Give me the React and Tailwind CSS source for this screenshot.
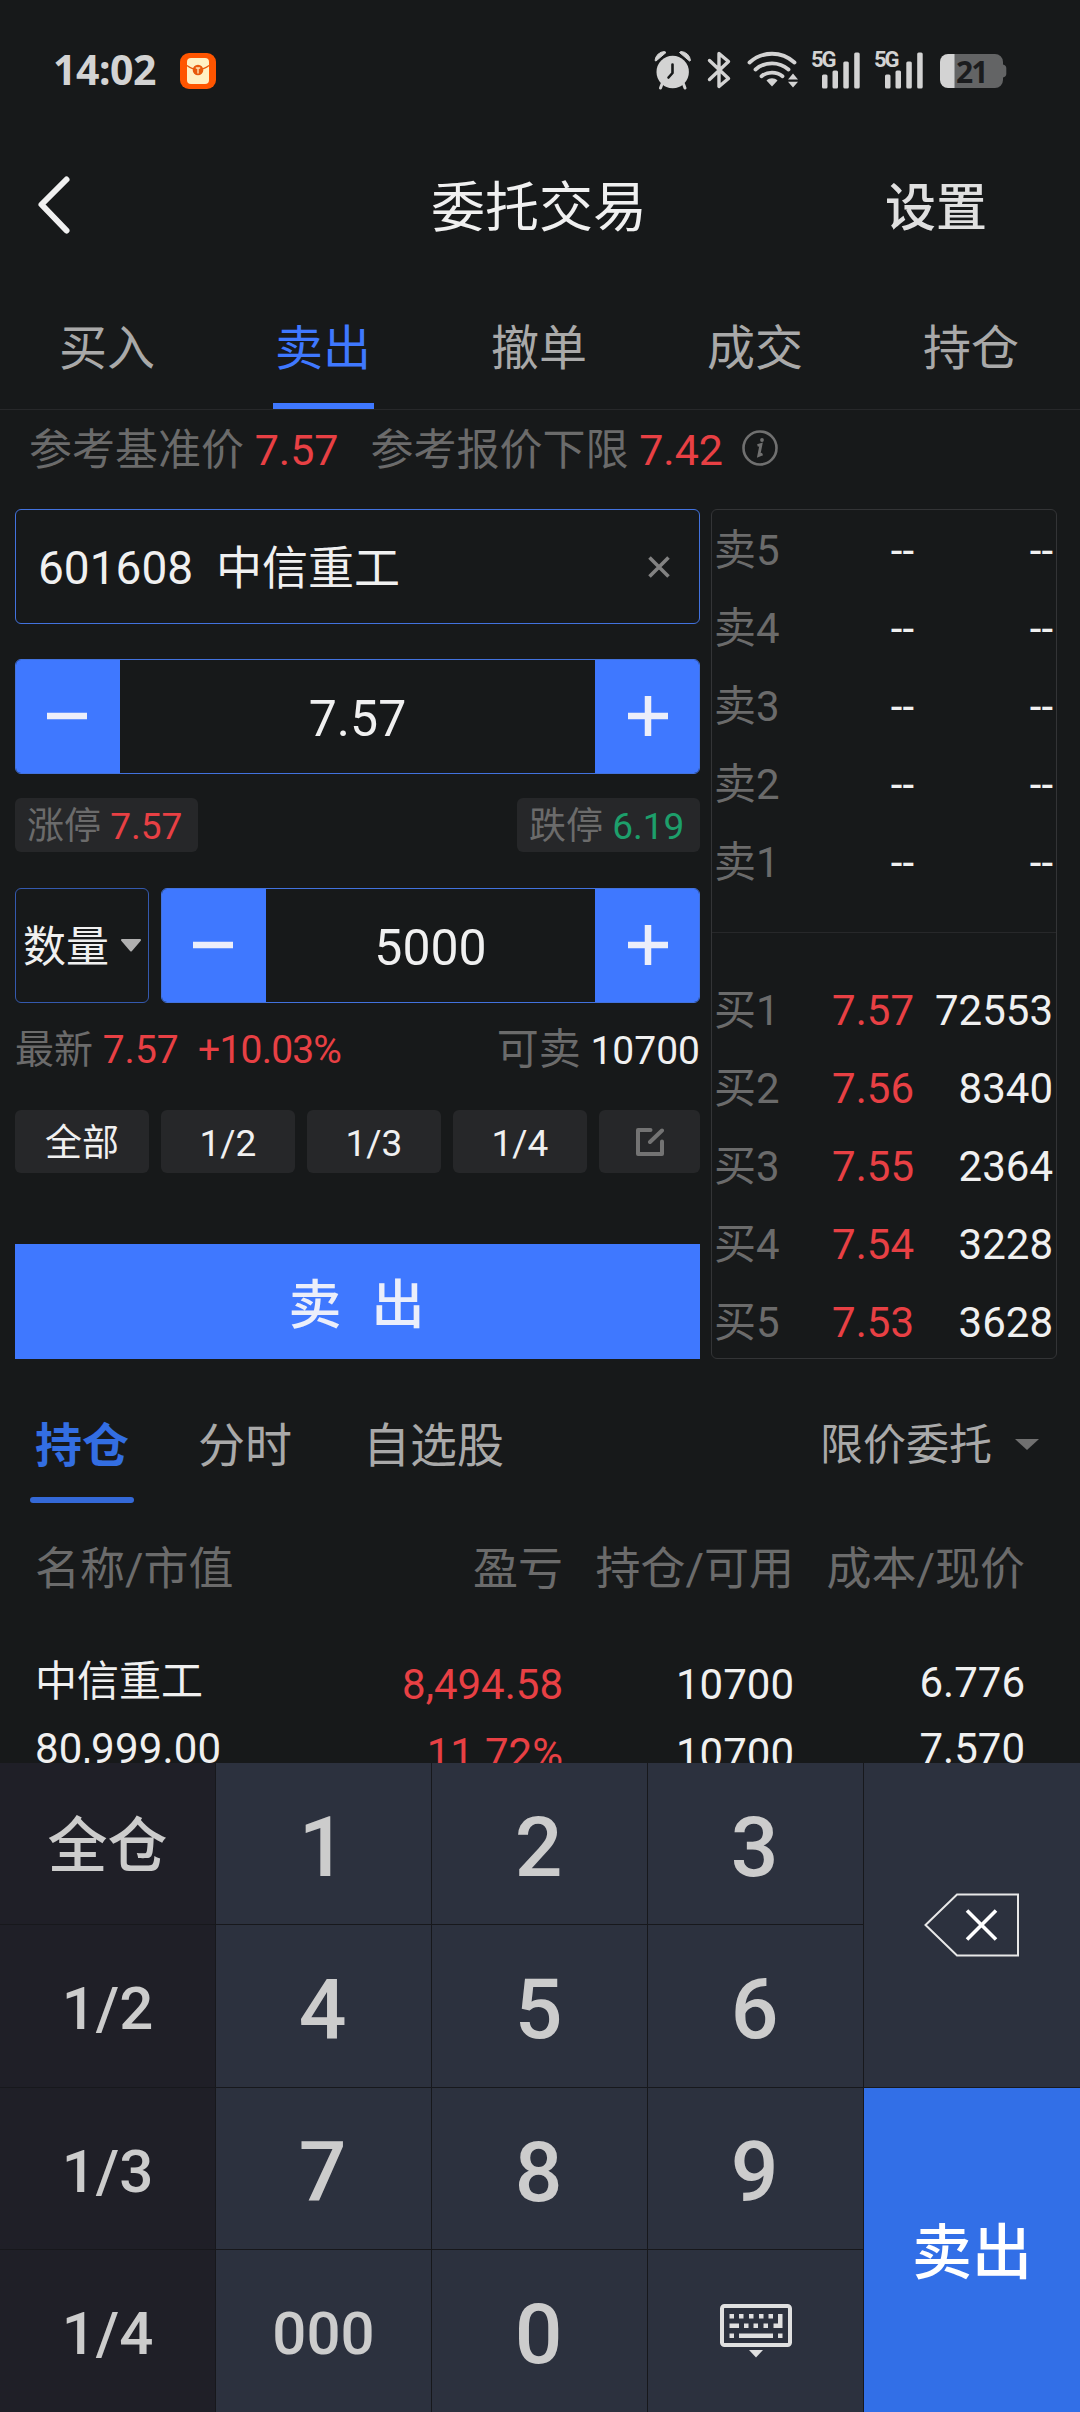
import { useState } from 'react';
import clsx from 'clsx';

const mainTabs = ['买入', '卖出', '撤单', '成交', '持仓'];

const sellRows = [
  { label: '卖5', price: '--', volume: '--' },
  { label: '卖4', price: '--', volume: '--' },
  { label: '卖3', price: '--', volume: '--' },
  { label: '卖2', price: '--', volume: '--' },
  { label: '卖1', price: '--', volume: '--' },
];

const buyRows = [
  { label: '买1', price: '7.57', volume: '72553' },
  { label: '买2', price: '7.56', volume: '8340' },
  { label: '买3', price: '7.55', volume: '2364' },
  { label: '买4', price: '7.54', volume: '3228' },
  { label: '买5', price: '7.53', volume: '3628' },
];

const AlarmIcon = () => (
  <svg width="38" height="40" viewBox="0 0 38 40" fill="#d3d3d3">
    <path d="M1 10.500A10 10 0 0 1 10.500 1.500L12 2.500 2 11Z" stroke="#d3d3d3" strokeLinejoin="round" />
    <path d="M36.500 10.500A10 10 0 0 0 27 1.500L25.500 2.500 35.500 11Z" stroke="#d3d3d3" strokeLinejoin="round" />
    <circle cx="18.700" cy="22" r="16.200" />
    <path d="M8 34l-1.500 4M29.500 34l1.500 4" stroke="#d3d3d3" strokeWidth="3" strokeLinecap="round" />
    <path d="M18.500 14.500v8.500l-4 4.500" fill="none" stroke="#17191a" strokeWidth="2.600" strokeLinecap="round" strokeLinejoin="round" />
  </svg>
);

const BluetoothIcon = () => (
  <svg width="25" height="40" viewBox="0 0 25 40" fill="none" stroke="#d3d3d3" strokeWidth="3.400" strokeLinejoin="round" strokeLinecap="round">
    <path d="M2.500 10.500L21.500 28.500 12 36.500V3.500L21.500 11.500 2.500 29.500" />
  </svg>
);

const WifiIcon = () => (
  <svg width="52" height="40" viewBox="0 0 52 40" fill="none" stroke="#d3d3d3" strokeWidth="3.800" strokeLinecap="round">
    <path d="M2.500 12.500C15.500 0.800 34.500 0.800 47.500 12.500" />
    <path d="M8.500 19.500C18 11.300 32 11.300 41.500 19.500" />
    <path d="M14.500 26.200C20.500 21.300 29.500 21.300 35.500 26.200" />
    <path d="M25 36.500L19.500 30.500C22.500 27.500 27.500 27.500 30.500 30.500Z" fill="#d3d3d3" stroke="none" />
    <path d="M46 23.500L51 29.500H41ZM46 37.500L51 31.800H41Z" fill="#d3d3d3" stroke="none" />
  </svg>
);

const SignalIcon = () => (
  <div className="relative h-10 w-[49px]">
    <svg width="49" height="40" viewBox="0 0 49 40" fill="#d3d3d3">
      <rect x="10" y="24.500" width="5.500" height="14" rx="1.500" />
      <rect x="20.500" y="20.500" width="5.500" height="18" rx="1.500" />
      <rect x="31.300" y="11.500" width="5.500" height="27" rx="1.500" />
      <rect x="42.200" y="2.500" width="5.500" height="36" rx="1.500" />
    </svg>
    <span className="absolute -left-px -top-0.5 text-[22px] font-bold leading-[24px] tracking-[-2px] text-[#d3d3d3]">5G</span>
  </div>
);

const BatteryIcon = () => (
  <div className="relative h-[34px] w-[67px]">
    <svg width="67" height="34" viewBox="0 0 67 34">
      <path d="M8 0H55a8 8 0 0 1 8 8v2.500c2 .5 3.300 1.500 3.300 3.500v6c0 2-1.300 3-3.300 3.500V26a8 8 0 0 1-8 8H8Z" fill="#636465" />
      <path d="M8 0H14.500V34H8a8 8 0 0 1-8-8V8a8 8 0 0 1 8-8Z" fill="#d3d3d3" />
    </svg>
    <span className="absolute left-4 top-0 font-['Noto_Sans',sans-serif] text-[30px] font-bold leading-[35px] tracking-[-2px] text-[#1b1c1e]">21</span>
  </div>
);

const RedPacketIcon = () => (
  <svg width="36" height="36" viewBox="0 0 36 36">
    <rect width="36" height="36" rx="9" fill="#ff5500" />
    <rect x="7" y="5" width="22" height="26" rx="4" fill="#fff0c4" />
    <path d="M7 12.500C13 17.500 23 17.500 29 12.500" fill="none" stroke="#e8590c" strokeWidth="1.200" />
    <circle cx="18" cy="17" r="5.300" fill="#e8590c" />
    <path d="M15.800 15h4.400M18 15v5.500" stroke="#ffe0b0" strokeWidth="1.400" />
  </svg>
);

const KeyboardIcon = () => (
  <svg width="72" height="54" viewBox="0 0 72 54" fill="#e0e0e0">
    <rect x="2" y="2" width="68" height="39" rx="2.500" fill="none" stroke="#e0e0e0" strokeWidth="4" />
    <path d="M9.500 10h4.500v4.500H9.500zM19 10h4.500v4.500H19zM29 10h4.500v4.500H29zM39 10h4.500v4.500H39zM48.500 10h4.500v4.500H48.500z" />
    <path d="M9.500 19.500h9.500V24H9.500zM24 19.500h4.500V24H24zM33.500 19.500H38V24H33.500zM43.500 19.500H48V24H43.500zM53.500 19.500H58V10h4.500V24h-9z" />
    <path d="M9.500 29.500h4.500V34H9.500zM19 29.500h34V34H19zM58 29.500h4.500V34H58z" />
    <path d="M29 46H43L36 53.500Z" />
  </svg>
);

const Stepper = ({ value, onMinus, onPlus }) => (
  <div className="flex h-[115px] flex-1 overflow-hidden rounded-md border border-[#4272de] bg-[#17191a]">
    <button onClick={onMinus} className="-my-px -ml-px flex w-[105px] items-center justify-center bg-[#3f78ff]">
      <svg width="40" height="40" viewBox="0 0 40 40" className="-ml-0.5 -mt-px" stroke="#eceefa" strokeWidth="6.500">
        <path d="M0 20H40" />
      </svg>
    </button>
    <div className="flex flex-1 items-center justify-center pt-1 text-[50px] text-[#f0f0f0]">{value}</div>
    <button onClick={onPlus} className="-my-px -mr-px flex w-[105px] items-center justify-center bg-[#3f78ff]">
      <svg width="40" height="40" viewBox="0 0 40 40" className="-mt-px" stroke="#eceefa" strokeWidth="6.500">
        <path d="M0 20H40M20 0V40" />
      </svg>
    </button>
  </div>
);

const BookRow = ({ row }) => (
  <div className="flex h-[78px] items-center pt-0.5 text-[42px]">
    <span className="w-[80px] text-[#6b6b6b]">{row.label}</span>
    <span className={clsx('w-[120px] text-right', row.price === '--' ? 'text-[#f0f0f0]' : 'text-[#e84044]')}>{row.price}</span>
    <span className="flex-1 text-right text-[#f0f0f0]">{row.volume}</span>
  </div>
);

const SideKey = ({ children }) => (
  <button className="flex items-center justify-center bg-[#1f1f27] pt-1.5 text-[60px] font-medium text-[#cccccc]">{children}</button>
);

const NumKey = ({ children, onClick }) => (
  <button onClick={onClick} className="flex items-center justify-center bg-[#2c313e] pr-0.5 pt-2 text-[84px] font-medium text-[#cccccc]">
    {children}
  </button>
);

const App = () => {
  const [activeTab, setActiveTab] = useState('卖出');
  const [price, setPrice] = useState(7.57);
  const [amount, setAmount] = useState('5000');

  const press = (key) => setAmount((prev) => prev + key);

  return (
    <div className="flex h-[2412px] w-[1080px] flex-col overflow-hidden bg-[#17191a] font-[Roboto,'Noto_Sans_CJK_SC',sans-serif] leading-none">
      {/* Barra de estado */}
      <div className="flex h-[140px] shrink-0 items-center pl-[53px] pr-[73px]">
        <span className="w-[127px] pb-0.5 font-['Noto_Sans',sans-serif] text-[41px] font-bold tracking-[-0.5px] text-[#d3d3d3]">14:02</span>
        <div className="flex-1 pt-0.5">
          <RedPacketIcon />
        </div>
        <div className="flex items-center">
          <AlarmIcon />
          <div className="ml-[15px]"><BluetoothIcon /></div>
          <div className="ml-[15px]"><WifiIcon /></div>
          <div className="ml-[13px]"><SignalIcon /></div>
          <div className="ml-[14px]"><SignalIcon /></div>
          <div className="ml-[16px] pt-0.5"><BatteryIcon /></div>
        </div>
      </div>

      {/* Cabecera */}
      <header className="grid h-[132px] shrink-0 grid-cols-3 items-center">
        <button className="pb-[3px] pl-[37px]">
          <svg width="34" height="60" viewBox="0 0 34 60" fill="none" stroke="#f0f0f0" strokeWidth="6" strokeLinecap="round" strokeLinejoin="round">
            <path d="M29.500 4.500L4.500 29.500 29.500 55.500" />
          </svg>
        </button>
        <h1 className="pr-0.5 pt-1.5 text-center text-[54px] text-[#f0f0f0]">委托交易</h1>
        <button className="pr-[93px] pt-1 text-right text-[51px] font-medium text-[#e0e0e0]">设置</button>
      </header>

      {/* Pestañas principales */}
      <nav className="grid h-[138px] shrink-0 grid-cols-5 border-b border-[#27282a]">
        {mainTabs.map((tab) => (
          <button
            key={tab}
            onClick={() => setActiveTab(tab)}
            className={clsx('relative flex items-center justify-center pr-0.5 pt-4 text-[48px]', tab === activeTab ? 'text-[#3f78ff]' : 'text-[#a9a9a9]')}
          >
            {tab}
            {tab === activeTab && <span className="absolute bottom-0 left-[57px] h-1.5 w-[101px] bg-[#3f78ff]" />}
          </button>
        ))}
      </nav>

      <div className="flex h-[78px] shrink-0 items-center whitespace-pre pl-[29px] pt-0.5 text-[43px] text-[#6b6b6b]">
        <span>参考基准价 <span className="text-[#e84044]">7.57</span></span>
        <span className="ml-[32px]">参考报价下限 <span className="text-[#e84044]">7.42</span></span>
        <svg width="36" height="36" viewBox="0 0 36 36" fill="none" stroke="#707070" className="mb-1 ml-[19px]">
          <circle cx="18" cy="18" r="16.500" strokeWidth="2.600" />
          <path d="M15.500 15.500L19 14.500 16.800 25.500 20.500 24" strokeWidth="2.800" />
          <circle cx="20" cy="10" r="1.900" fill="#707070" stroke="none" />
        </svg>
      </div>

      {/* Formulario y libro de órdenes */}
      <section className="mt-[21px] flex h-[850px] shrink-0 gap-[11px] pl-[15px]">
        <div className="flex w-[685px] flex-col">
          <div className="flex h-[115px] items-center justify-between rounded-md border border-[#4272de] pl-[22px] pr-[29px]">
            <span className="whitespace-pre pt-0.5 text-[46px] text-[#f0f0f0]">601608  中信重工</span>
            <svg width="22" height="22" viewBox="0 0 22 22" stroke="#828282" strokeWidth="3.600">
              <path d="M1.500 1.500L20.500 20.500M20.500 1.500L1.500 20.500" />
            </svg>
          </div>

          <div className="mt-[35px] flex">
            <Stepper value={price.toFixed(2)} onMinus={() => setPrice(price - 0.01)} onPlus={() => setPrice(price + 0.01)} />
          </div>

          <div className="mt-6 flex justify-between text-[37px] text-[#6b6b6b]">
            <div className="flex h-[54px] w-[183px] items-center whitespace-pre rounded-md bg-[#262729] pl-3 pt-0.5">
              <span>涨停 <span className="text-[#e84044]">7.57</span></span>
            </div>
            <div className="flex h-[54px] w-[183px] items-center whitespace-pre rounded-md bg-[#262729] pl-3 pt-0.5">
              <span>跌停 <span className="text-[#1d9f6b]">6.19</span></span>
            </div>
          </div>

          <div className="mt-9 flex gap-3">
            <button className="flex h-[115px] w-[134px] items-center rounded-md border border-[#3459ae] pl-[7px] pt-1 text-[43px] text-[#f0f0f0]">
              数量
              <svg width="20" height="13" viewBox="0 0 20 13" fill="#b0b0b0" stroke="#b0b0b0" strokeWidth="2" strokeLinejoin="round" className="mb-1 ml-[12px]">
                <path d="M1 1H19L10 11.500Z" />
              </svg>
            </button>
            <Stepper
              value={amount}
              onMinus={() => setAmount(String(Number(amount) - 100))}
              onPlus={() => setAmount(String(Number(amount) + 100))}
            />
          </div>

          <div className="flex h-[92px] items-center justify-between whitespace-pre pt-0.5 text-[39px]">
            <span className="text-[#e84044]"><span className="text-[#6b6b6b]">最新</span> 7.57  <span className="tracking-[-0.8px]">+10.03%</span></span>
            <span className="text-[#f0f0f0]"><span className="text-[42px] text-[#6b6b6b]">可卖</span> 10700</span>
          </div>

          <div className="mt-[15px] flex gap-3 text-[37px] text-[#f0f0f0]">
            {['全部', '1/2', '1/3', '1/4'].map((item) => (
              <button key={item} className="flex h-[63px] w-[134px] items-center justify-center rounded-md bg-[#262729] pt-1">
                {item}
              </button>
            ))}
            <button className="flex h-[63px] flex-1 items-center justify-center rounded-md bg-[#262729]">
              <svg width="28" height="28" viewBox="0 0 28 28" fill="none" stroke="#737373" strokeWidth="4" strokeLinecap="round" strokeLinejoin="round">
                <path d="M14.500 2H2V26H26V13.500" />
                <path d="M26 2.500L14 14" />
              </svg>
            </button>
          </div>

          <button className="mt-[71px] flex h-[115px] items-center justify-center gap-[30px] bg-[#3f78ff] pr-0.5 pt-2.5 text-[53px] font-medium text-[#ebeefa]">
            <span>卖</span>
            <span>出</span>
          </button>
        </div>

        <div className="h-[850px] w-[346px] rounded-md border border-[#333436] pl-[2px] pr-[3px] pt-px">
          {sellRows.map((row) => (
            <BookRow key={row.label} row={row} />
          ))}
          <div className="-ml-[2px] -mr-[3px] mb-[38px] mt-[31px] h-px bg-[#27282a]" />
          {buyRows.map((row) => (
            <BookRow key={row.label} row={row} />
          ))}
        </div>
      </section>

      {/* Pestañas de posiciones */}
      <div className="flex h-[170px] shrink-0 items-center pl-[30px] text-[47px] text-[#a9a9a9]">
        <div className="relative flex h-full w-[104px] items-center justify-center pt-0.5 font-bold text-[#336ee2]">
          持仓
          <span className="absolute bottom-[26px] left-0 h-1.5 w-full rounded-full bg-[#3469d8]" />
        </div>
        <span className="ml-[64px] pt-0.5">分时</span>
        <span className="ml-[71px] flex-1 pt-0.5">自选股</span>
        <span className="pt-0.5 text-[43px]">限价委托</span>
        <svg width="24" height="12" viewBox="0 0 24 12" fill="#707070" className="mt-0.5 ml-[23px] mr-[41px]">
          <path d="M0 0H24L12 11Z" />
        </svg>
      </div>

      <div className="grid h-[76px] shrink-0 grid-cols-[300px_228px_231px_231px] items-center pl-[35px] pt-1 text-[45px] text-[#6b6b6b]">
        <span>名称/市值</span>
        <span className="text-right">盈亏</span>
        <span className="text-right">持仓/可用</span>
        <span className="text-right">成本/现价</span>
      </div>

      <div className="grid h-[158px] shrink-0 grid-cols-[300px_228px_231px_231px] overflow-hidden pl-[35px] pt-[43px] text-[42px] text-[#f0f0f0]">
        <div className="leading-[67px]">
          <div>中信重工</div>
          <div className="tracking-[0.2px]">80,999.00</div>
        </div>
        <div className="pt-0.5 text-right leading-[69px] text-[#e84044]">
          <div>8,494.58</div>
          <div>11.72%</div>
        </div>
        <div className="pt-0.5 text-right leading-[69px]">
          <div>10700</div>
          <div>10700</div>
        </div>
        <div className="pt-0.5 text-right leading-[66px]">
          <div>6.776</div>
          <div>7.570</div>
        </div>
      </div>

      {/* Teclado */}
      <div className="grid h-[649px] shrink-0 grid-cols-[215px_215px_215px_215px_216px] grid-rows-[161px_162px_161px_162px] gap-px bg-[#17181c]">
        <SideKey>全仓</SideKey>
        <NumKey onClick={() => press('1')}>1</NumKey>
        <NumKey onClick={() => press('2')}>2</NumKey>
        <NumKey onClick={() => press('3')}>3</NumKey>
        <button onClick={() => setAmount(amount.slice(0, -1))} className="row-span-2 flex items-center justify-center bg-[#2c313e]">
          <svg width="96" height="64" viewBox="0 0 96 64" fill="none" stroke="#e8e8e8">
            <path d="M33 1.500H94V62.500H33L1.500 32Z" strokeWidth="2" />
            <path d="M43 17.500L72 46.500M72 17.500L43 46.500" stroke="#ffffff" strokeWidth="3.600" />
          </svg>
        </button>
        <SideKey>1/2</SideKey>
        <NumKey onClick={() => press('4')}>4</NumKey>
        <NumKey onClick={() => press('5')}>5</NumKey>
        <NumKey onClick={() => press('6')}>6</NumKey>
        <SideKey>1/3</SideKey>
        <NumKey onClick={() => press('7')}>7</NumKey>
        <NumKey onClick={() => press('8')}>8</NumKey>
        <NumKey onClick={() => press('9')}>9</NumKey>
        <button className="row-span-2 flex items-center justify-center bg-[#326fe7] pt-2 text-[60px] font-medium text-white">卖出</button>
        <SideKey>1/4</SideKey>
        <button onClick={() => press('000')} className="flex items-center justify-center bg-[#2c313e] pt-1.5 text-[60px] font-medium text-[#cccccc]">
          000
        </button>
        <NumKey onClick={() => press('0')}>0</NumKey>
        <button className="flex items-center justify-center bg-[#2c313e]">
          <KeyboardIcon />
        </button>
      </div>
    </div>
  );
};

export default App;
